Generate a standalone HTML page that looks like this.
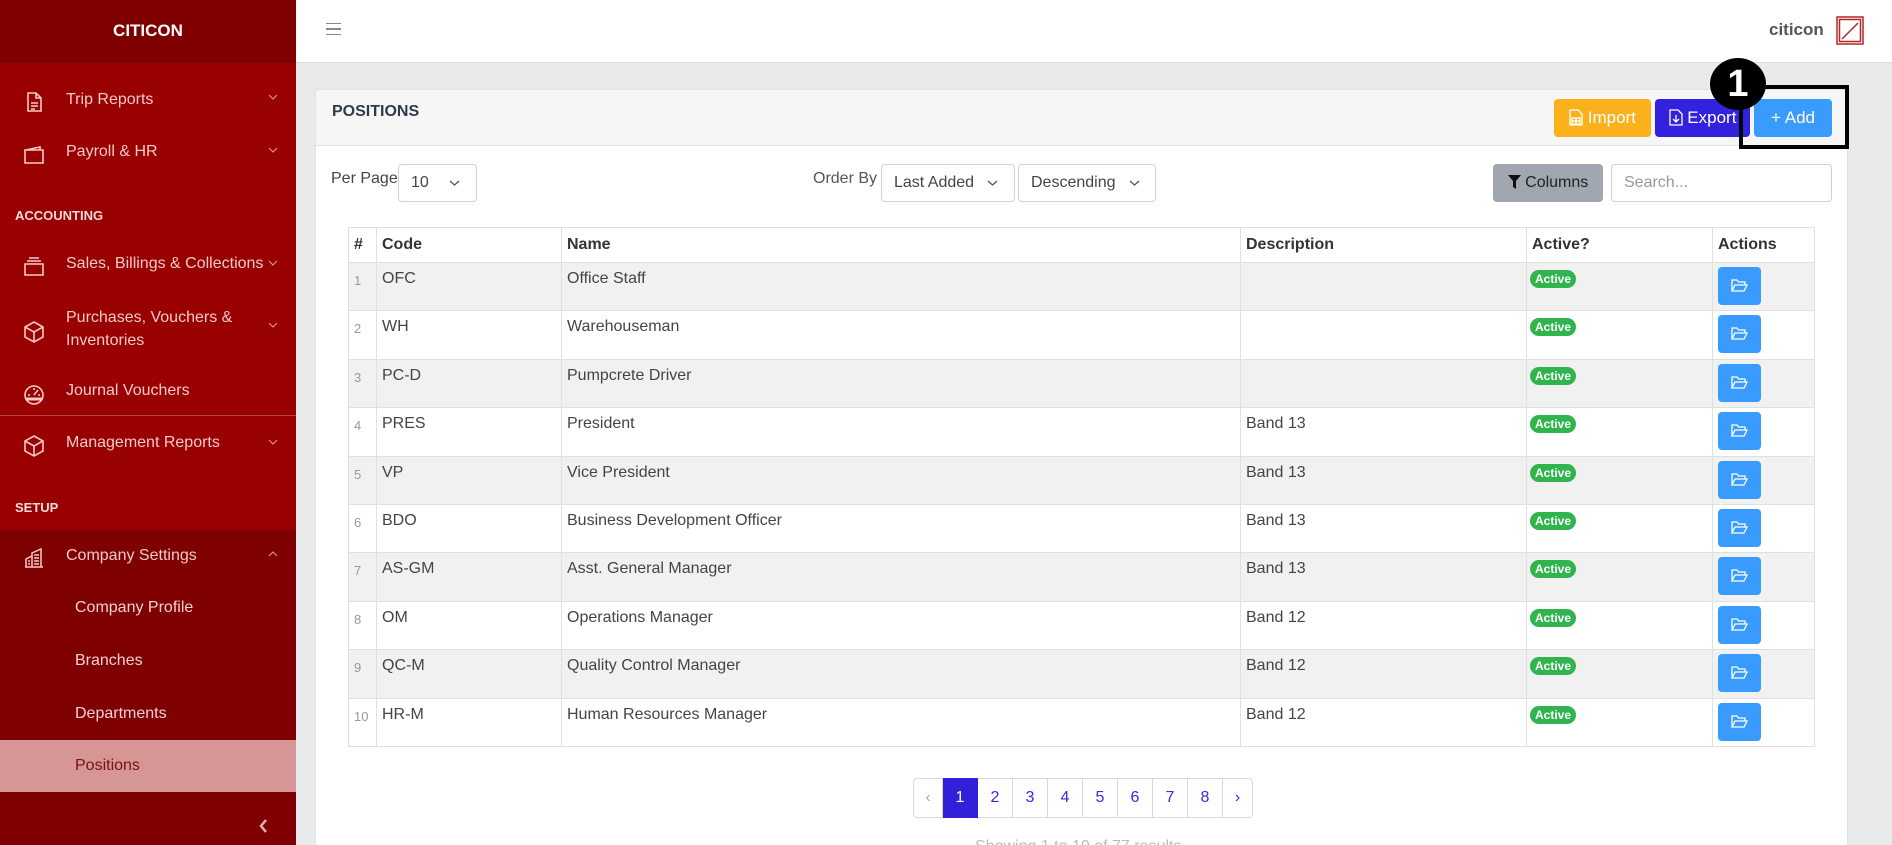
<!DOCTYPE html>
<html style="width:1892px;height:845px;overflow:hidden"><head><meta charset="utf-8">
<style>
*{box-sizing:border-box;margin:0;padding:0}
body{width:1892px;height:845px;overflow:hidden;background:#e9eaec;font-family:"Liberation Sans",sans-serif;position:relative;color:#333}
.a{position:absolute}
#sb{left:0;top:0;width:296px;height:845px;background:#990000}
#sb .top{left:0;top:0;width:296px;height:63px;background:#7f0000;color:#fff;font-weight:bold;font-size:17px;text-align:center;line-height:62px}
.mi{left:66px;color:#f3c9c9;font-size:16px}
.ic{left:22px;width:24px;height:24px}
.chev{left:268px;width:10px;height:10px}
.sec{left:15px;color:#f4dada;font-weight:bold;font-size:13px}
.sub{left:75px;color:#f3d0d0;font-size:16px}
#hd{left:296px;top:0;width:1596px;height:63px;background:#fff;border-bottom:1px solid #dcdcdc}
#card{left:315px;top:89px;width:1533px;height:756px;background:#fff;border:1px solid #e2e2e2;border-bottom:none;border-radius:4px 4px 0 0;overflow:hidden}
#ch{left:0;top:0;width:1531px;height:56px;background:#f6f6f6;border-bottom:1px solid #e2e2e2}
.btn{height:38px;border-radius:4px;color:#fff;font-size:17px;line-height:38px;text-align:center}
.sel{height:38px;border:1px solid #cfd2d8;border-radius:4px;background:#fff;font-size:16px;color:#444;line-height:36px;padding-left:12px}
table{border-collapse:collapse;position:absolute;left:348px;top:227px;width:1467px;font-size:16px}
td,th{border:1px solid #dfe0e3;text-align:left;vertical-align:top;padding:0 5px}
th{height:35px;line-height:33px;font-weight:bold;color:#333}
td{height:48.4px;padding-top:7px;color:#444}
tr:nth-child(even) td{background:#f1f1f1}
td.n{color:#999;font-size:13px;padding-top:10px}
.badge{display:inline-block;background:#2fb44e;color:#fff;font-weight:bold;font-size:12px;border-radius:10px;padding:2px 5px;margin-top:-2px;margin-left:-2px}
.ab{width:43px;height:38px;background:#3a9bff;border-radius:4px;margin-top:-3px;margin-left:0px;display:flex;align-items:center;justify-content:center}
.pg{top:778px;height:40px;width:35px;border:1px solid #d8d9de;border-left:none;background:#fff;color:#3a2ae0;font-size:16px;text-align:center;line-height:38px}
</style></head><body>
<div id="sb" class="a">
 <div class="top a">CITICON</div>
 <svg class="a ic" style="top:90px" viewBox="0 0 24 24" fill="none" stroke="#f3c9c9" stroke-width="1.6"><path d="M6 3h8l5 5v13H6z M14 3v5h5 M9 13h7 M9 16h7 M9 19h4"/></svg>
 <div class="a mi" style="top:91px">Trip Reports</div>
 <svg class="a chev" style="top:92px" viewBox="0 0 10 10" fill="none" stroke="#e8a0a0" stroke-width="1"><path d="M1 3l4 4 4-4"/></svg>
 <svg class="a ic" style="top:142px" viewBox="0 0 24 24" fill="none" stroke="#f3c9c9" stroke-width="1.6"><path d="M3 8h18v13H3z M4 8l14-3v3"/></svg>
 <div class="a mi" style="top:143px">Payroll &amp; HR</div>
 <svg class="a chev" style="top:145px" viewBox="0 0 10 10" fill="none" stroke="#e8a0a0" stroke-width="1"><path d="M1 3l4 4 4-4"/></svg>
 <div class="a sec" style="top:208px">ACCOUNTING</div>
 <svg class="a ic" style="top:254px" viewBox="0 0 24 24" fill="none" stroke="#f3c9c9" stroke-width="1.6"><path d="M3 10h18v11H3z M5 7h14 M7 4h10"/></svg>
 <div class="a mi" style="top:255px">Sales, Billings &amp; Collections</div>
 <svg class="a chev" style="top:258px" viewBox="0 0 10 10" fill="none" stroke="#e8a0a0" stroke-width="1"><path d="M1 3l4 4 4-4"/></svg>
 <svg class="a ic" style="top:320px" viewBox="0 0 24 24" fill="none" stroke="#f3c9c9" stroke-width="1.6"><path d="M12 2l9 5v10l-9 5-9-5V7z M3 7l9 5 9-5 M12 12v10"/></svg>
 <div class="a mi" style="top:306px;line-height:23px">Purchases, Vouchers &amp;<br>Inventories</div>
 <svg class="a chev" style="top:320px" viewBox="0 0 10 10" fill="none" stroke="#e8a0a0" stroke-width="1"><path d="M1 3l4 4 4-4"/></svg>
 <svg class="a ic" style="top:382px" viewBox="0 0 24 24" fill="none" stroke="#f3c9c9" stroke-width="1.6"><circle cx="12" cy="13" r="9"/><path d="M12 13l4-5 M6 13h2 M16 13h2 M12 6v2"/><path d="M4 17h16" stroke-width="3"/></svg>
 <div class="a mi" style="top:382px">Journal Vouchers</div>
 <div class="a" style="left:0;top:415px;width:296px;height:1px;background:#b84040"></div>
 <svg class="a ic" style="top:434px" viewBox="0 0 24 24" fill="none" stroke="#f3c9c9" stroke-width="1.6"><path d="M12 2l9 5v10l-9 5-9-5V7z M3 7l9 5 9-5 M12 12v10"/></svg>
 <div class="a mi" style="top:434px">Management Reports</div>
 <svg class="a chev" style="top:437px" viewBox="0 0 10 10" fill="none" stroke="#e8a0a0" stroke-width="1"><path d="M1 3l4 4 4-4"/></svg>
 <div class="a sec" style="top:500px">SETUP</div>
 <div class="a" style="left:0;top:530px;width:296px;height:315px;background:#7f0000"></div>
 <svg class="a ic" style="top:546px" viewBox="0 0 24 24" fill="none" stroke="#f3c9c9" stroke-width="1.5"><path d="M3 21h18 M4 21v-8l6-3v11 M10 21V7l9-4v18 M12 9h5 M12 12h5 M12 15h5 M12 18h5 M6 15h2 M6 18h2"/></svg>
 <div class="a mi" style="top:547px">Company Settings</div>
 <svg class="a chev" style="top:549px" viewBox="0 0 10 10" fill="none" stroke="#e8a0a0" stroke-width="1"><path d="M1 7l4-4 4 4"/></svg>
 <div class="a sub" style="top:599px">Company Profile</div>
 <div class="a sub" style="top:652px">Branches</div>
 <div class="a sub" style="top:705px">Departments</div>
 <div class="a" style="left:0;top:740px;width:296px;height:52px;background:#d69696"></div>
 <div class="a sub" style="top:757px;color:#7a1010">Positions</div>
 <svg class="a" style="left:258px;top:818px;width:10px;height:16px" viewBox="0 0 10 16" fill="none" stroke="#e0b0b0" stroke-width="2.5"><path d="M8 2L3 8l5 6"/></svg>
</div>
<div id="hd" class="a">
 <div class="a" style="left:30px;top:23px;width:15px;height:12px;border-top:1.5px solid #888;border-bottom:1.5px solid #888"><div style="margin-top:4px;height:1.5px;background:#888"></div></div>
 <div class="a" style="left:1473px;top:20px;font-size:17px;font-weight:bold;color:#555">citicon</div>
 <svg class="a" style="left:1540px;top:16px;width:28px;height:29px" viewBox="0 0 28 29" fill="none" stroke="#b52525" stroke-width="1.5"><rect x="1" y="1" width="26" height="27"/><rect x="3.5" y="3.5" width="21" height="22"/><path d="M6 23L22 7"/></svg>
</div>
<div id="card" class="a">
 <div id="ch" class="a"><div class="a" style="left:16px;top:13px;font-size:16px;font-weight:bold;color:#2f3a4a">POSITIONS</div></div>
</div>
<div class="a btn" style="left:1554px;top:99px;width:97px;background:#fbb11c"><svg style="vertical-align:-3px" width="14" height="17" viewBox="0 0 14 17" fill="none" stroke="#fff" stroke-width="1.3"><path d="M1 1h8l4 4v11H1z M3 9h8v6H3z M3 12h8 M7 9v6"/></svg> Import</div>
<div class="a btn" style="left:1655px;top:99px;width:95px;background:#3322dd"><svg style="vertical-align:-3px" width="14" height="17" viewBox="0 0 14 17" fill="none" stroke="#fff" stroke-width="1.3"><path d="M1 1h8l4 4v11H1z M7 6v7 M4 10l3 3 3-3"/></svg> Export</div>
<div class="a btn" style="left:1754px;top:99px;width:78px;background:#3a9bff">+ Add</div>
<div class="a" style="left:1739px;top:85px;width:110px;height:64px;border:4px solid #000"></div>
<div class="a" style="left:1710px;top:58px;width:56px;height:52px;border-radius:50%;background:#000;color:#fff;font-weight:bold;font-size:38px;text-align:center;line-height:52px">1</div>
<div class="a" style="left:331px;top:170px;font-size:16px;color:#444">Per Page</div>
<div class="a sel" style="left:398px;top:164px;width:79px">10<svg class="a" style="left:50px;top:14px" width="11" height="8" viewBox="0 0 11 8" fill="none" stroke="#555" stroke-width="1.3"><path d="M1 2l4.5 4 4.5-4"/></svg></div>
<div class="a" style="left:813px;top:170px;font-size:16px;color:#555">Order By</div>
<div class="a sel" style="left:881px;top:164px;width:134px">Last Added<svg class="a" style="left:105px;top:14px" width="11" height="8" viewBox="0 0 11 8" fill="none" stroke="#555" stroke-width="1.3"><path d="M1 2l4.5 4 4.5-4"/></svg></div>
<div class="a sel" style="left:1018px;top:164px;width:138px">Descending<svg class="a" style="left:110px;top:14px" width="11" height="8" viewBox="0 0 11 8" fill="none" stroke="#555" stroke-width="1.3"><path d="M1 2l4.5 4 4.5-4"/></svg></div>
<div class="a btn" style="left:1493px;top:164px;width:110px;background:#a1a7b0;color:#222;font-size:16px"><svg style="vertical-align:-2px" width="13" height="14" viewBox="0 0 13 14"><path d="M0 0h13L8 6v8L5 12V6z" fill="#111"/></svg> Columns</div>
<div class="a sel" style="left:1611px;top:164px;width:221px;color:#999">Search...</div>
<table>
<tr><th style="width:28px">#</th><th style="width:185px">Code</th><th style="width:679px">Name</th><th style="width:286px">Description</th><th style="width:186px">Active?</th><th>Actions</th></tr>
<tr><td class="n">1</td><td>OFC</td><td>Office Staff</td><td></td><td><span class="badge">Active</span></td><td><div class="ab"><svg width="17" height="14" viewBox="0 0 17 14" fill="none" stroke="#fff" stroke-width="1.3"><path d="M1 12V1h5l1.5 2H14v3 M1 12l3-6h12l-3 6z"/></svg></div></td></tr>
<tr><td class="n">2</td><td>WH</td><td>Warehouseman</td><td></td><td><span class="badge">Active</span></td><td><div class="ab"><svg width="17" height="14" viewBox="0 0 17 14" fill="none" stroke="#fff" stroke-width="1.3"><path d="M1 12V1h5l1.5 2H14v3 M1 12l3-6h12l-3 6z"/></svg></div></td></tr>
<tr><td class="n">3</td><td>PC-D</td><td>Pumpcrete Driver</td><td></td><td><span class="badge">Active</span></td><td><div class="ab"><svg width="17" height="14" viewBox="0 0 17 14" fill="none" stroke="#fff" stroke-width="1.3"><path d="M1 12V1h5l1.5 2H14v3 M1 12l3-6h12l-3 6z"/></svg></div></td></tr>
<tr><td class="n">4</td><td>PRES</td><td>President</td><td>Band 13</td><td><span class="badge">Active</span></td><td><div class="ab"><svg width="17" height="14" viewBox="0 0 17 14" fill="none" stroke="#fff" stroke-width="1.3"><path d="M1 12V1h5l1.5 2H14v3 M1 12l3-6h12l-3 6z"/></svg></div></td></tr>
<tr><td class="n">5</td><td>VP</td><td>Vice President</td><td>Band 13</td><td><span class="badge">Active</span></td><td><div class="ab"><svg width="17" height="14" viewBox="0 0 17 14" fill="none" stroke="#fff" stroke-width="1.3"><path d="M1 12V1h5l1.5 2H14v3 M1 12l3-6h12l-3 6z"/></svg></div></td></tr>
<tr><td class="n">6</td><td>BDO</td><td>Business Development Officer</td><td>Band 13</td><td><span class="badge">Active</span></td><td><div class="ab"><svg width="17" height="14" viewBox="0 0 17 14" fill="none" stroke="#fff" stroke-width="1.3"><path d="M1 12V1h5l1.5 2H14v3 M1 12l3-6h12l-3 6z"/></svg></div></td></tr>
<tr><td class="n">7</td><td>AS-GM</td><td>Asst. General Manager</td><td>Band 13</td><td><span class="badge">Active</span></td><td><div class="ab"><svg width="17" height="14" viewBox="0 0 17 14" fill="none" stroke="#fff" stroke-width="1.3"><path d="M1 12V1h5l1.5 2H14v3 M1 12l3-6h12l-3 6z"/></svg></div></td></tr>
<tr><td class="n">8</td><td>OM</td><td>Operations Manager</td><td>Band 12</td><td><span class="badge">Active</span></td><td><div class="ab"><svg width="17" height="14" viewBox="0 0 17 14" fill="none" stroke="#fff" stroke-width="1.3"><path d="M1 12V1h5l1.5 2H14v3 M1 12l3-6h12l-3 6z"/></svg></div></td></tr>
<tr><td class="n">9</td><td>QC-M</td><td>Quality Control Manager</td><td>Band 12</td><td><span class="badge">Active</span></td><td><div class="ab"><svg width="17" height="14" viewBox="0 0 17 14" fill="none" stroke="#fff" stroke-width="1.3"><path d="M1 12V1h5l1.5 2H14v3 M1 12l3-6h12l-3 6z"/></svg></div></td></tr>
<tr><td class="n">10</td><td>HR-M</td><td>Human Resources Manager</td><td>Band 12</td><td><span class="badge">Active</span></td><td><div class="ab"><svg width="17" height="14" viewBox="0 0 17 14" fill="none" stroke="#fff" stroke-width="1.3"><path d="M1 12V1h5l1.5 2H14v3 M1 12l3-6h12l-3 6z"/></svg></div></td></tr>
</table>
<div class="a pg" style="left:913px;width:30px;border-left:1px solid #d8d9de;border-radius:4px 0 0 4px;color:#aaa">‹</div>
<div class="a pg" style="left:943px;background:#3120d9;color:#fff;border-color:#3120d9">1</div>
<div class="a pg" style="left:978px">2</div>
<div class="a pg" style="left:1013px">3</div>
<div class="a pg" style="left:1048px">4</div>
<div class="a pg" style="left:1083px">5</div>
<div class="a pg" style="left:1118px">6</div>
<div class="a pg" style="left:1153px">7</div>
<div class="a pg" style="left:1188px">8</div>
<div class="a pg" style="left:1223px;width:30px;border-radius:0 4px 4px 0">›</div>
<div class="a" style="left:975px;top:838px;font-size:16px;color:#bbb">Showing 1 to 10 of 77 results</div>
</body></html>
